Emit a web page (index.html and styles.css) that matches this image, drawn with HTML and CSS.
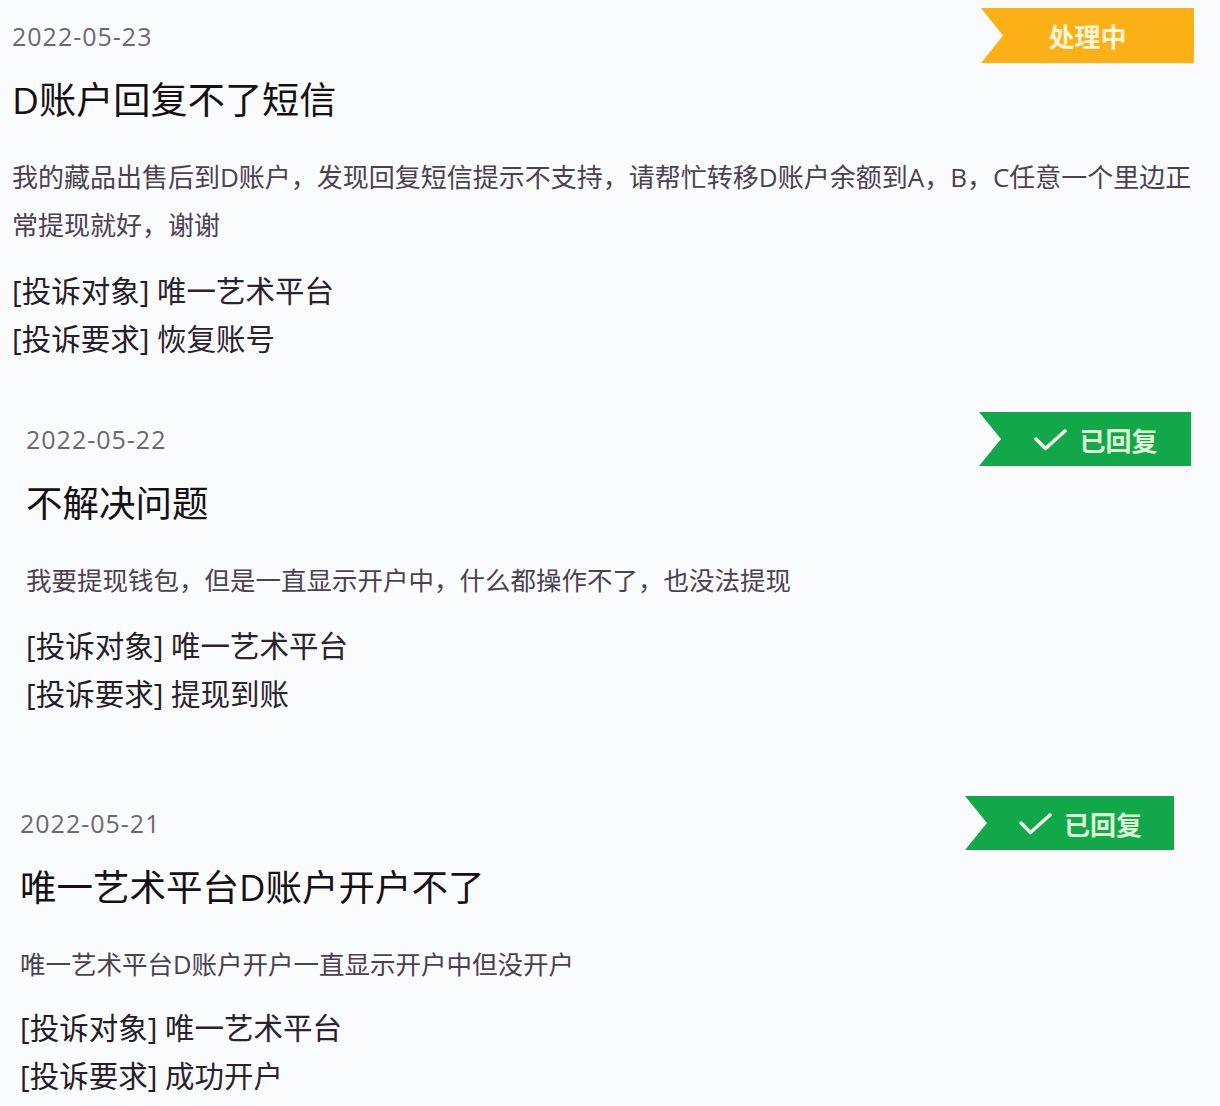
FILE: index.html
```html
<!DOCTYPE html>
<html lang="zh-CN">
<head>
<meta charset="utf-8">
<title>投诉列表</title>
<link rel="stylesheet" href="styles.css">
</head>
<body>
<main class="list">
  <article class="card card-1">
    <header class="card-head">
      <span class="date">2022-05-23</span>
      <span class="badge badge-pending">处理中</span>
    </header>
    <h2 class="title">D账户回复不了短信</h2>
    <p class="desc">我的藏品出售后到D账户，发现回复短信提示不支持，请帮忙转移D账户余额到A，B，C任意一个里边正常提现就好，谢谢</p>
    <div class="meta">
      <p class="meta-row"><span class="meta-key">[投诉对象]</span> 唯一艺术平台</p>
      <p class="meta-row"><span class="meta-key">[投诉要求]</span> 恢复账号</p>
    </div>
  </article>

  <article class="card card-2">
    <header class="card-head">
      <span class="date">2022-05-22</span>
      <span class="badge badge-done">
        <svg class="check" viewBox="0 0 33 22" width="33" height="22" aria-hidden="true"><polyline points="2,10 11.5,19.5 31,2" /></svg>
        <span>已回复</span>
      </span>
    </header>
    <h2 class="title">不解决问题</h2>
    <p class="desc">我要提现钱包，但是一直显示开户中，什么都操作不了，也没法提现</p>
    <div class="meta">
      <p class="meta-row"><span class="meta-key">[投诉对象]</span> 唯一艺术平台</p>
      <p class="meta-row"><span class="meta-key">[投诉要求]</span> 提现到账</p>
    </div>
  </article>

  <article class="card card-3">
    <header class="card-head">
      <span class="date">2022-05-21</span>
      <span class="badge badge-done">
        <svg class="check" viewBox="0 0 33 22" width="33" height="22" aria-hidden="true"><polyline points="2,10 11.5,19.5 31,2" /></svg>
        <span>已回复</span>
      </span>
    </header>
    <h2 class="title">唯一艺术平台D账户开户不了</h2>
    <p class="desc">唯一艺术平台D账户开户一直显示开户中但没开户</p>
    <div class="meta">
      <p class="meta-row"><span class="meta-key">[投诉对象]</span> 唯一艺术平台</p>
      <p class="meta-row"><span class="meta-key">[投诉要求]</span> 成功开户</p>
    </div>
  </article>
</main>
</body>
</html>
```

FILE: styles.css
```css
html, body {
  margin: 0;
  padding: 0;
  background: #fafbfd;
}

body {
  width: 1220px;
  height: 1106px;
  overflow: hidden;
  font-family: "Open Sans", "Noto Sans CJK SC", sans-serif;
  color: #141014;
}

.list {
  display: flex;
  flex-direction: column;
}

.card {
  display: flex;
  flex-direction: column;
}

.card-1 { margin-top: 8px; padding: 0 26px 0 12px; }
.card-2 { margin-top: 49px; padding: 0 29px 0 26px; }
.card-3 { margin-top: 78px; padding: 0 46px 0 20px; }

.card-head {
  display: flex;
  justify-content: space-between;
  align-items: center;
}

.date {
  font-size: 25px;
  line-height: 30px;
  color: #6e6575;
  letter-spacing: 1px;
}

.badge {
  height: 55px;
  width: 213px;
  display: flex;
  align-items: center;
  justify-content: center;
  box-sizing: border-box;
  clip-path: polygon(0 0, 100% 0, 100% 100%, 0 100%, 22px 50%);
  font-family: "Noto Sans CJK SC", sans-serif;
  font-size: 26px;
}

.badge-pending {
  background: #fbb018;
  color: #fff5d6;
  font-weight: 700;
}

.badge-done {
  background: #12a84a;
  color: #dcf7d6;
  font-weight: 700;
  height: 54px;
  width: 212px;
  padding-left: 22px;
  gap: 12px;
}

.card-3 .badge-done { width: 209px; }

.check {
  display: block;
  margin-top: 2px;
}

.check polyline {
  fill: none;
  stroke: #f2fbef;
  stroke-width: 3.5;
  stroke-linecap: round;
  stroke-linejoin: round;
}

.title {
  margin: 13px 0 0;
  font-size: 36.5px;
  line-height: 48px;
  font-weight: 400;
  color: #141014;
}

.card-1 .title { font-size: 37.2px; }

.desc {
  margin: 29px 0 0;
  font-size: 25.5px;
  line-height: 48px;
  color: #4b4150;
}

.card-1 .desc { font-size: 26px; }

.meta {
  margin-top: 18px;
}

.card-3 .meta { margin-top: 16px; }

.meta-row {
  margin: 0;
  font-size: 29.5px;
  line-height: 48px;
  color: #2b2230;
}

.meta-key {
  color: #241c28;
}
```
